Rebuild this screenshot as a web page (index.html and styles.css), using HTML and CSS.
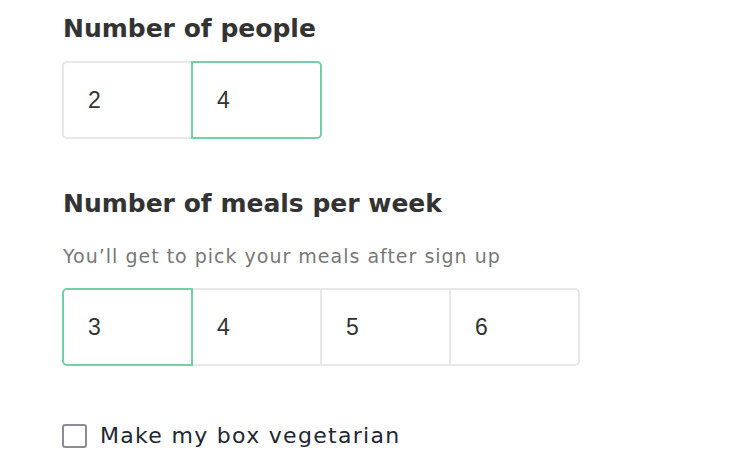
FILE: index.html
```html
<!DOCTYPE html>
<html lang="en">
<head>
<meta charset="utf-8">
<link rel="stylesheet" href="styles.css">
</head>
<body>
<main class="form">
  <section class="field">
    <h2 class="field-title">Number of people</h2>
    <div class="options">
      <div class="option">2</div>
      <div class="option selected">4</div>
    </div>
  </section>
  <section class="field field-meals">
    <h2 class="field-title">Number of meals per week</h2>
    <p class="field-hint">You’ll get to pick your meals after sign up</p>
    <div class="options">
      <div class="option selected">3</div>
      <div class="option">4</div>
      <div class="option">5</div>
      <div class="option">6</div>
    </div>
  </section>
  <label class="check">
    <span class="check-box"></span>
    <span class="check-label">Make my box vegetarian</span>
  </label>
</main>
</body>
</html>
```
FILE: styles.css
```css
html, body {
  margin: 0;
  padding: 0;
  background: #ffffff;
}
body {
  font-family: "DejaVu Sans", "Open Sans", sans-serif;
  color: #333333;
}
.form {
  padding: 12px 0 0 62px;
  display: flex;
  flex-direction: column;
}
.field-title {
  margin: 0;
  font-size: 25px;
  line-height: 34px;
  font-weight: 700;
  color: #333333;
  padding-left: 1px;
}
.field-hint {
  margin: 23px 0 0 1px;
  font-size: 19px;
  line-height: 24px;
  letter-spacing: 1px;
  color: #777777;
}
.options {
  display: flex;
  margin-top: 15px;
}
.field-meals {
  margin-top: 48px;
}
.field-meals .options {
  margin-top: 20px;
}
.option {
  box-sizing: border-box;
  width: 131px;
  height: 78px;
  border: 2px solid #e8e8e8;
  margin-left: -2px;
  display: flex;
  align-items: center;
  padding-left: 24px;
  font-family: "Liberation Sans", Arial, sans-serif;
  font-size: 23px;
  color: #333333;
  background: #ffffff;
  position: relative;
}
.option:first-child {
  margin-left: 0;
  border-radius: 5px 0 0 5px;
}
.option:last-child {
  border-radius: 0 5px 5px 0;
}
.option.selected {
  border-color: #72d0a8;
  z-index: 1;
}
.check {
  display: flex;
  align-items: center;
  margin-top: 57px;
}
.check-box {
  box-sizing: border-box;
  width: 25px;
  height: 24px;
  border: 2px solid #8c8c99;
  border-radius: 3px;
}
.check-label {
  margin-left: 13px;
  font-size: 22px;
  letter-spacing: 1.3px;
  color: #1f2733;
}
```
